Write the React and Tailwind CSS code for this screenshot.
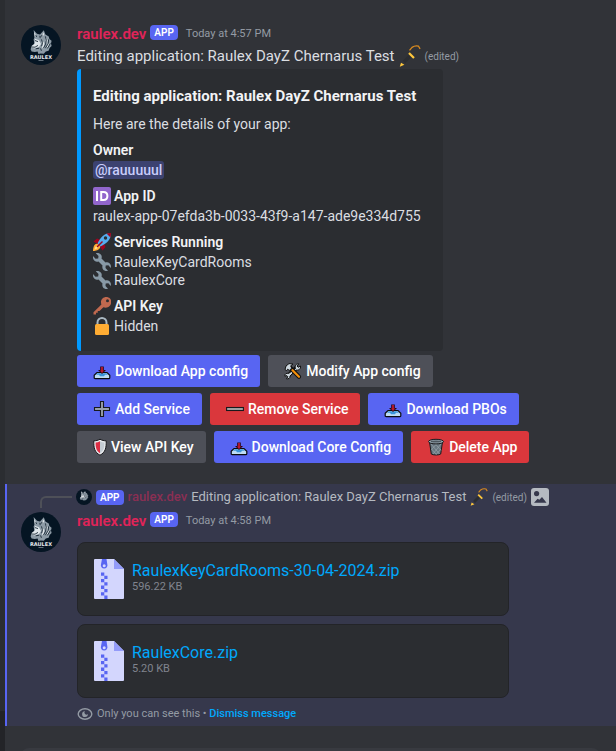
import React from "react";

function WolfAvatar({ className, labelled }) {
  return (
    <svg viewBox="0 0 40 40" className={className} role="img" aria-label="raulex.dev avatar">
      <circle cx="20" cy="20" r="20" fill="#051523" />
      <path
        d="M12.600 5 16 8.800l3 .6L22.800 5.200l1.600 4.200 3.400 2 .6 2.600 2.200 1.800-.6 2.800.6 2.400-2 2-1 2.800-2.800.8-2 2.200-3-.4-2.400.6-.8-2.600-2.800.6-3.200-.6-1-2.200.6-1.800 2.200-1.800 1-2.600-.8-3.200 1-3z"
        fill="#8d9ba6"
      />
      <g fill="#dfe6ea">
        <path d="m13 7 2.400 3.200-1.600 2zM22.600 7.200l.6 3-2.400.6z" />
        <path d="m14 13.800 4 1.400 2 3.800-2 3-4.600 1.400-3-1 .4-1.600 2.800-2z" />
        <path d="m21 15.600 2.400 2.200-.4 3.600-2.200 2.200.6-3.600zM25 12.600l1.800 3-.8 3.800-1.200-3.800zM28.400 17.400l-.8 3.800-2.400 2 1.200-3.600z" />
      </g>
      <g fill="none" stroke="#051523" strokeWidth="0.8">
        <path d="m14.600 9.800 1 2.200M21.400 9.800l-1.600 2M14 15.600l3 1M10.600 22l3.400.2 3-1.800M14.800 23.800l3.400-.6M20.400 14.400l1.200 3.200-1 3.600M24.400 11.400l1 3.800-.8 4-2 3.600M27.600 14.400l-.4 4.200-2.800 4.600M29.400 18.400l-3 5M18.800 10.800l.4 2.400M19.600 23.400l.8 2.400" />
      </g>
      {labelled && (
        <>
          <text x="20" y="33.500" fill="#e6eaee" fontSize="5" fontWeight="700" fontFamily="DejaVu Sans, sans-serif" textAnchor="middle">RAULEX</text>
          <path d="M17.500 35.500h5" stroke="#63707b" strokeWidth="1" />
        </>
      )}
    </svg>
  );
}

function PickEmoji({ className }) {
  return (
    <svg viewBox="0 0 22 22" className={className} aria-hidden="true">
      <path d="M5 17 11 11" stroke="#2b2d31" strokeWidth="3.400" />
      <path d="M10.500 5.400 13 2.400C15 1 17.500.6 19.500 1.200l1.600 2.600" fill="none" stroke="#d98a1f" strokeWidth="1.300" />
      <path d="m10 8 5 5" stroke="#ffc83d" strokeWidth="2.200" />
      <path d="m.8 21.800 1.200-4 3.400 2z" fill="#ffc83d" />
    </svg>
  );
}

function IdEmoji({ className }) {
  return (
    <svg viewBox="0 0 18 18" className={className} aria-hidden="true">
      <rect width="18" height="18" rx="2" fill="#9266cc" />
      <path d="M4 4v10M8.200 5h2.200c2.600 0 4 1.400 4 4s-1.400 4-4 4H8.200z" fill="none" stroke="#fff" strokeWidth="2" />
    </svg>
  );
}

function RocketEmoji({ className }) {
  return (
    <svg viewBox="0 0 36 36" className={className} aria-hidden="true">
      <path d="M1 17 8 11l7 3-6 8zM19 35l6-7-3-7-8 6z" fill="#a0041e" />
      <path d="M0 36s0-9 4-13c3-3 8 0 9 2 2 2 2 5-1 7-4 4-12 4-12 4z" fill="#ffac33" />
      <path d="M3 33s1-6 4-7c2 0 3 1 3 3-1 3-7 4-7 4z" fill="#ffe08a" />
      <path d="M9 21C15 9 22 0 36 0c0 14-9 21-21 27z" fill="#55acee" />
      <path d="M27 1c4-1 9-1 9-1s0 5-1 9z" fill="#a0041e" />
      <circle cx="25" cy="10" r="3.400" fill="#292f33" />
      <path d="M8 28 19 17" stroke="#a0041e" strokeWidth="3" />
    </svg>
  );
}

function WrenchEmoji({ className }) {
  return (
    <svg viewBox="0 0 36 36" className={className} aria-hidden="true">
      <path
        d="M5.600.6 11 6l-.6 5L5 11.400 0 6.200c-.8 4 .6 8 3.600 10 2.600 1.600 5 1.400 7.400.8L19 25c-.6 2.600-.8 5.400 1.200 8 2.200 2.800 6 3.600 9.800 2.400L25 30l.4-5 5.400-.6L35.400 30c1.200-4 .2-7.400-2.400-9.600-2.600-2-5.400-2-8-1.200L17 11c.8-2.600.8-5.200-1-7.600C13.600.6 9.600-.4 5.600.6z"
        fill="#8899a6"
      />
    </svg>
  );
}

function KeyEmoji({ className }) {
  return (
    <svg viewBox="0 0 36 36" className={className} aria-hidden="true">
      <path
        d="M34 3c-4-4-11-4-15 0-3.400 3.400-3.800 7.400-2.200 11.800L1 30.600V35h5v-3.500h3.500V28H13l7.800-7.600c4.600 1.800 9 1 12.400-2.400C37 14 37.600 7 34 3z"
        fill="#c1694f"
      />
      <circle cx="29" cy="7.500" r="3" fill="#2b2d31" />
    </svg>
  );
}

function LockEmoji({ className }) {
  return (
    <svg viewBox="0 0 36 36" className={className} aria-hidden="true">
      <path d="M9 18v-7a9 9 0 0 1 18 0v7" fill="none" stroke="#aab8c2" strokeWidth="4" />
      <rect x="4" y="14" width="28" height="22" rx="3" fill="#ffac33" />
    </svg>
  );
}

function InboxIcon() {
  return (
    <svg viewBox="0 0 18 18" className="size-[18px]" aria-hidden="true">
      <path d="M1.200 13.200 4 10.500h10l2.800 2.700v2.500q0 1-1 1H2.200q-1 0-1-1z" fill="#bddcf4" stroke="#0b0b0f" strokeWidth="1.200" />
      <path d="M4.500 11.200h9l1.500 1.600H12L11 14.200H7l-1-1.400H3z" fill="#3b94d9" />
      <path d="M9 4.500v4" stroke="#2a0610" strokeWidth="3.600" />
      <path d="M5 8h8L9 12z" fill="#2a0610" />
      <path d="M9 5V9" stroke="#be1931" strokeWidth="1.800" />
      <path d="M6.800 8.600h4.400L9 11z" fill="#be1931" />
    </svg>
  );
}

function ToolsIcon() {
  return (
    <svg viewBox="0 0 18 18" className="size-[18px]" aria-hidden="true">
      <path d="M4 13.800 13 5" stroke="#111" strokeWidth="4" />
      <path d="M11.500 6.500c-1-3 1-5 3.300-4.700L13 4l1.200 1.300L16.500 4c.6 3-2 4.700-4.500 4L6 14c.4 2-1.600 3.300-3.500 2.800l1.300-2-1-1.200-2 .6C.6 12 2.600 10.600 4.500 11.500z" fill="#ccd6dd" stroke="#111" />
      <path d="m5.500 5 9.500 9.800" stroke="#111" strokeWidth="4.200" strokeLinecap="round" />
      <path d="m8.500 8.200 6.500 6.600" stroke="#f4900c" strokeWidth="2.200" strokeLinecap="round" />
      <path d="M1 7.500 2 4l3-2.400L9 2 6.700 3.800l1 2.400-2.400 2.200-1.600-1.200L2.500 8.600z" fill="#ccd6dd" stroke="#111" />
    </svg>
  );
}

function PlusIcon() {
  return (
    <svg viewBox="0 0 18 18" className="size-[18px]" aria-hidden="true">
      <path d="M7.500 1.500h3v6h6v3h-6v6h-3v-6h-6v-3h6z" fill="#99a0a8" stroke="#18191c" strokeWidth="1.100" />
    </svg>
  );
}

function MinusIcon() {
  return (
    <svg viewBox="0 0 18 18" className="size-[18px]" aria-hidden="true">
      <rect x="0.600" y="7.500" width="16.800" height="3" fill="#a5a6a8" stroke="#18191c" strokeWidth="1.100" />
    </svg>
  );
}

function ShieldIcon() {
  return (
    <svg viewBox="0 0 14 18" className="h-[18px] w-[14px]" aria-hidden="true">
      <path d="M7 1.200C9 2.400 11 2.800 13.200 2.800c.2 7-.7 11.500-6.200 14.400C1.500 14.300.6 9.800.8 2.800 3 2.800 5 2.400 7 1.200z" fill="#e8ebee" stroke="#18191c" />
      <path d="M7 3.200C5.600 4 4 4.400 2.600 4.500c0 5.300.8 8.300 4.400 10.700z" fill="#dd2e44" />
      <path d="M7 3.200c1.400.8 3 1.200 4.400 1.300 0 5.300-.8 8.300-4.400 10.700z" fill="#c4ccd3" />
    </svg>
  );
}

function TrashIcon() {
  return (
    <svg viewBox="0 0 18 18" className="size-[18px]" aria-hidden="true">
      <path d="M2.500 4h13l-1.800 12c-1.700 1.300-7.700 1.300-9.400 0z" fill="#66757f" stroke="#18191c" />
      <path d="m4 6 8.500 10M8 5.500l6 7M4.500 11l5 5.500M14 6 6 16M10 5.500l-5.500 6M14 11l-5 5.500" stroke="#99a3ab" strokeWidth="0.700" />
      <ellipse cx="9" cy="3.600" rx="7.500" ry="2.300" fill="#9aaab4" stroke="#18191c" />
      <ellipse cx="9" cy="3.500" rx="5.300" ry="1" fill="#4c565e" />
    </svg>
  );
}

function ZipIcon() {
  return (
    <svg viewBox="0 0 30 40" className="h-10 w-[30px] shrink-0" aria-hidden="true">
      <path d="M1 0h19l10 10v29q0 1-1 1H1q-1 0-1-1V1q0-1 1-1z" fill="#d3d6fd" />
      <path d="M20 0 30 10H20z" fill="#939bf9" />
      <path d="M8 0h4.500l.8 5.200a3.300 3.300 0 1 1-6.300 0z" fill="#5865f2" />
      <circle cx="10.200" cy="6.800" r="1.500" fill="#d3d6fd" />
      <path d="M7 13.500h3.300v3.200H7zM7 20h3.300v3.300H7zM7 26.600h3.300v3.300H7zM7 33.200h3.300v3.300H7zM10.300 16.700h3.200V20h-3.200zM10.300 23.300h3.200v3.300h-3.200zM10.300 29.900h3.200v3.300h-3.200zM10.300 36.500h3.200V40h-3.200z" fill="#5865f2" />
    </svg>
  );
}

function ImageIcon() {
  return (
    <svg viewBox="0 0 18 18" className="size-[18px] shrink-0" aria-hidden="true">
      <rect width="18" height="18" rx="3" fill="#b5bac1" />
      <path d="m3 14.800 3.600-4 1.800 1L11 9l4.500 5.800z" fill="#36384c" />
      <circle cx="5.600" cy="5.600" r="2.600" fill="#36384c" />
    </svg>
  );
}

function EyeIcon() {
  return (
    <svg viewBox="0 0 16 16" className="size-4 shrink-0" aria-hidden="true">
      <ellipse cx="8" cy="8" rx="6.800" ry="5.200" fill="none" stroke="#949ba4" strokeWidth="1.400" />
      <path d="M8 5.200A2.900 2.900 0 1 0 10.900 8 2 2 0 0 1 8 5.200z" fill="#949ba4" />
    </svg>
  );
}

function AppTag() {
  return <span className="flex h-[15px] shrink-0 items-center rounded bg-[#5865f2] px-1 text-[10px] font-semibold text-white">APP</span>;
}

function Header({ time }) {
  return (
    <header className="flex h-[22px] items-center">
      <h3 className="text-[15px] font-semibold text-[#e02459]">raulex.dev</h3>
      <span className="mr-2 ml-1 pb-1">
        <AppTag />
      </span>
      <time className="text-[11px] text-[#949ba4]">{time}</time>
    </header>
  );
}

function Field({ icon, name, children }) {
  return (
    <section className="mt-2">
      <h5 className="mb-0.5 flex h-[18px] items-center gap-[3px] font-semibold text-[#f2f3f5]">
        {icon}
        {name}
      </h5>
      {children}
    </section>
  );
}

function IconLine({ icon, children }) {
  return (
    <p className="flex h-[18px] items-center gap-[3px]">
      {icon}
      {children}
    </p>
  );
}

const tones = {
  primary: "bg-[#5865f2]",
  secondary: "bg-[#4e5058]",
  danger: "bg-[#da373c]",
};

function ActionButton({ icon, tone, children }) {
  return (
    <button type="button" className={`flex h-8 items-center gap-1 rounded-[3px] pr-3 pl-4 text-sm font-medium whitespace-nowrap text-white ${tones[tone]}`}>
      {icon}
      {children}
    </button>
  );
}

function FileCard({ name, size }) {
  return (
    <article className="flex h-[74px] items-center gap-2 rounded-lg border border-[#232428] bg-[#2b2d31] px-4">
      <ZipIcon />
      <div className="pb-1">
        <a href="#download" className="block text-base leading-5 text-[#00a8fc]">
          {name}
        </a>
        <p className="text-[11px] leading-3 text-[#80848e]">{size}</p>
      </div>
    </article>
  );
}

export default function App() {
  const emoji = "size-[18px] shrink-0";
  return (
    <div className="flex h-screen overflow-hidden bg-[#313338] font-[Roboto,sans-serif] text-[#dbdee1]">
      <aside className="flex w-[5px] shrink-0 flex-col bg-[#2b2d31]">
        <div className="mt-auto h-10 bg-[#232428]" />
      </aside>
      <main className="flex min-w-0 grow flex-col">
        <article className="flex gap-4 pt-[23px] pl-4">
          <WolfAvatar className="mt-0.5 size-10 shrink-0" labelled />
          <div className="min-w-0">
            <Header time="Today at 4:57 PM" />
            <p className="flex h-[22px] items-center gap-1 text-[15px] whitespace-nowrap">
              Editing application: Raulex DayZ Chernarus Test
              <PickEmoji className="size-[22px]" />
              <span className="text-[10px] text-[#949ba4]">(edited)</span>
            </p>
            <div className="mt-0.5 w-[366px] rounded border-l-4 border-[#0099ff] bg-[#2b2d31] py-4 pr-4 pl-3 text-sm leading-[18px]">
              <h4 className="text-[15px] leading-[22px] font-bold whitespace-nowrap text-[#f2f3f5]">Editing application: Raulex DayZ Chernarus Test</h4>
              <p className="mt-2">Here are the details of your app:</p>
              <Field name="Owner">
                <p>
                  <span className="inline-block rounded-[3px] bg-[#3c4270] px-0.5 font-medium text-[#c9cdfb]">@rauuuuul</span>
                </p>
              </Field>
              <Field icon={<IdEmoji className={emoji} />} name="App ID">
                <p className="whitespace-nowrap">raulex-app-07efda3b-0033-43f9-a147-ade9e334d755</p>
              </Field>
              <Field icon={<RocketEmoji className={emoji} />} name="Services Running">
                <IconLine icon={<WrenchEmoji className={emoji} />}>RaulexKeyCardRooms</IconLine>
                <IconLine icon={<WrenchEmoji className={emoji} />}>RaulexCore</IconLine>
              </Field>
              <Field icon={<KeyEmoji className={emoji} />} name="API Key">
                <IconLine icon={<LockEmoji className={emoji} />}>Hidden</IconLine>
              </Field>
            </div>
            <div className="mt-1 flex flex-col gap-1.5">
              <div className="flex gap-2">
                <ActionButton tone="primary" icon={<InboxIcon />}>Download App config</ActionButton>
                <ActionButton tone="secondary" icon={<ToolsIcon />}>Modify App config</ActionButton>
              </div>
              <div className="flex gap-2">
                <ActionButton tone="primary" icon={<PlusIcon />}>Add Service</ActionButton>
                <ActionButton tone="danger" icon={<MinusIcon />}>Remove Service</ActionButton>
                <ActionButton tone="primary" icon={<InboxIcon />}>Download PBOs</ActionButton>
              </div>
              <div className="flex gap-2">
                <ActionButton tone="secondary" icon={<ShieldIcon />}>View API Key</ActionButton>
                <ActionButton tone="primary" icon={<InboxIcon />}>Download Core Config</ActionButton>
                <ActionButton tone="danger" icon={<TrashIcon />}>Delete App</ActionButton>
              </div>
            </div>
          </div>
        </article>

        <article className="mt-[21px] border-l-2 border-[#5865f2] bg-[#36384c] pt-0.5 pb-1 pl-3.5">
          <div className="flex h-[22px] items-center gap-1 text-[13px] whitespace-nowrap text-[#b5bac1]">
            <span className="mt-2.5 ml-[19px] h-3 w-8 shrink-0 rounded-tl-md border-t-2 border-l-2 border-[#4e5058]" />
            <WolfAvatar className="size-4 shrink-0" />
            <AppTag />
            <span className="font-medium text-[#8b2f53]">raulex.dev</span>
            <span>Editing application: Raulex DayZ Chernarus Test</span>
            <PickEmoji className="size-[18px] shrink-0" />
            <span className="text-[10px] text-[#949ba4]">(edited)</span>
            <ImageIcon />
          </div>
          <div className="flex gap-4 pt-0.5">
            <WolfAvatar className="mt-0.5 size-10 shrink-0" labelled />
            <div className="min-w-0 grow">
              <Header time="Today at 4:58 PM" />
              <div className="mt-2.5 flex max-w-[432px] flex-col gap-2">
                <FileCard name="RaulexKeyCardRooms-30-04-2024.zip" size="596.22 KB" />
                <FileCard name="RaulexCore.zip" size="5.20 KB" />
              </div>
              <footer className="mt-2 flex h-4 items-center gap-1 text-[11px] text-[#949ba4]">
                <EyeIcon />
                <span>
                  Only you can see this •{" "}
                  <button type="button" className="font-medium text-[#00a8fc]">Dismiss message</button>
                </span>
              </footer>
            </div>
          </div>
        </article>
        <div className="mx-4 mt-[22px] h-11 shrink-0 rounded-lg bg-[#383a40]" />
      </main>
    </div>
  );
}
